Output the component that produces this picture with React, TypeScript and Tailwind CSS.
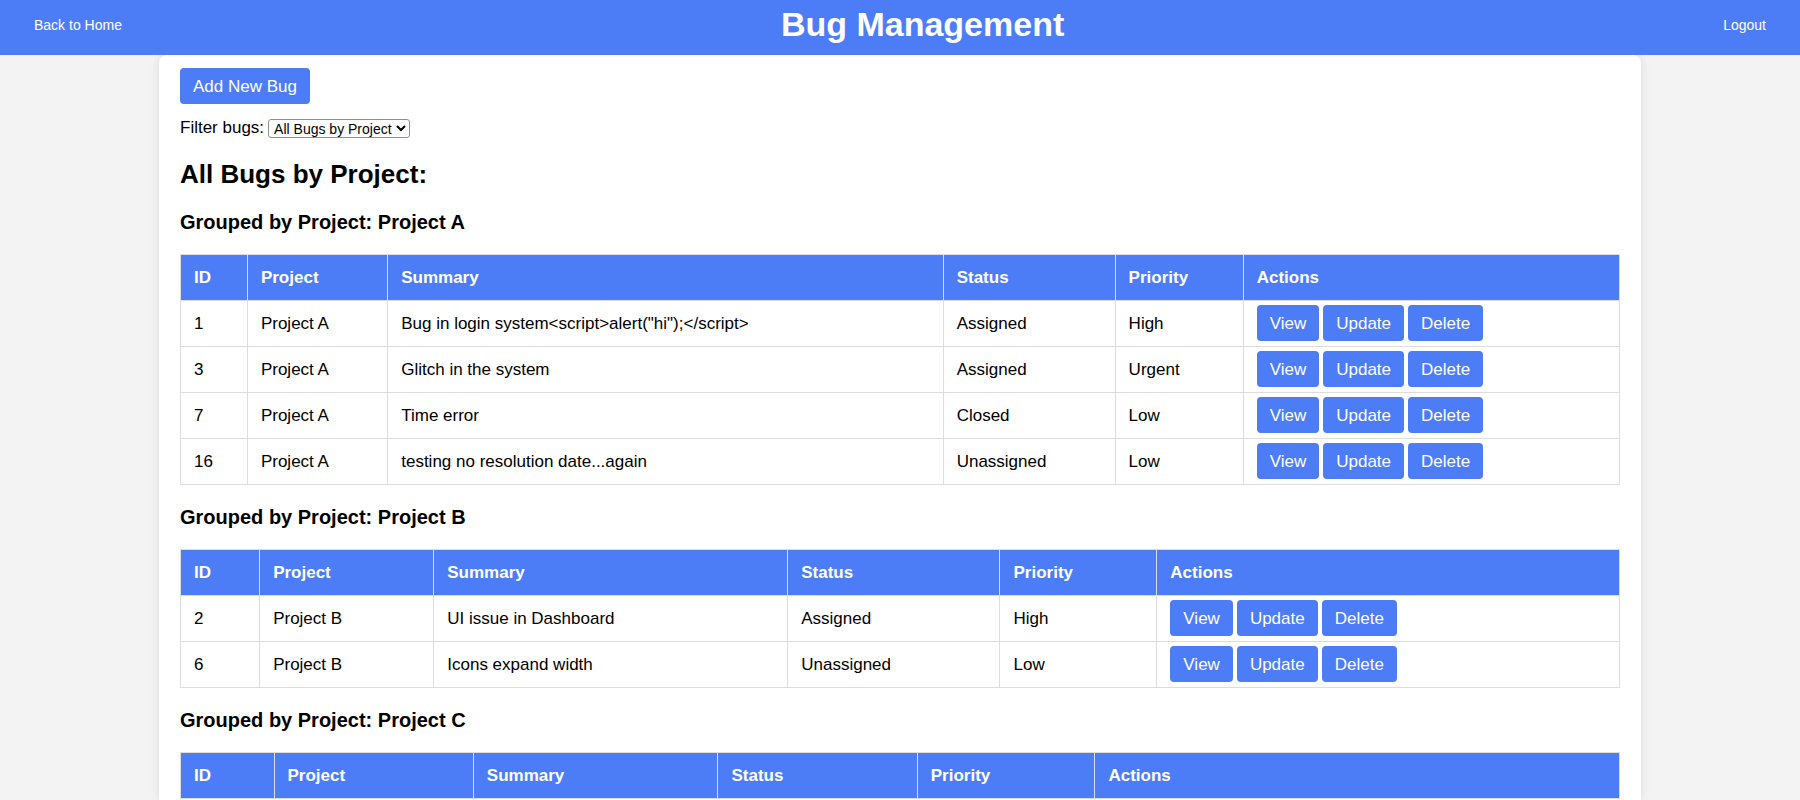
import { useState } from 'react'

type Bug = { id: number; summary: string; status: string; priority: string }
type Group = { project: string; widths: string[]; bugs: Bug[] }

const columns = ['ID', 'Project', 'Summary', 'Status', 'Priority', 'Actions']
const actions = ['View', 'Update', 'Delete']

const groups: Group[] = [
  {
    project: 'Project A',
    widths: ['w-[4.65%]', 'w-[9.75%]', 'w-[38.6%]', 'w-[11.95%]', 'w-[8.9%]', 'w-[26.15%]'],
    bugs: [
      { id: 1, summary: 'Bug in login system<script>alert("hi");</script>', status: 'Assigned', priority: 'High' },
      { id: 3, summary: 'Glitch in the system', status: 'Assigned', priority: 'Urgent' },
      { id: 7, summary: 'Time error', status: 'Closed', priority: 'Low' },
      { id: 16, summary: 'testing no resolution date...again', status: 'Unassigned', priority: 'Low' },
    ],
  },
  {
    project: 'Project B',
    widths: ['w-[5.5%]', 'w-[12.1%]', 'w-[24.6%]', 'w-[14.75%]', 'w-[10.9%]', 'w-[32.15%]'],
    bugs: [
      { id: 2, summary: 'UI issue in Dashboard', status: 'Assigned', priority: 'High' },
      { id: 6, summary: 'Icons expand width', status: 'Unassigned', priority: 'Low' },
    ],
  },
  {
    project: 'Project C',
    widths: ['w-[6.5%]', 'w-[13.85%]', 'w-[17%]', 'w-[13.85%]', 'w-[12.35%]', 'w-[36.45%]'],
    bugs: [],
  },
]

const buttonClass = 'h-9 rounded bg-[#4c7df7] px-[13px] pt-0.5 text-[17px] leading-5 text-white'
const cellClass = 'border border-[#ddd] px-[13px]'

function BugTable({ project, widths, bugs }: Group) {
  return (
    <section>
      <h3 className="my-5 text-[20px] leading-6 font-bold">Grouped by Project: {project}</h3>
      <table aria-label={project} className="w-full table-fixed border-collapse text-left">
        <thead>
          <tr className="h-[46px] bg-[#4c7df7] text-white">
            {columns.map((name, i) => (
              <th key={name} scope="col" className={`${cellClass} font-bold ${widths[i]}`}>
                {name}
              </th>
            ))}
          </tr>
        </thead>
        <tbody>
          {bugs.map((bug) => (
            <tr key={bug.id} className="h-[46px]">
              <td className={cellClass}>{bug.id}</td>
              <td className={cellClass}>{project}</td>
              <td className={cellClass}>{bug.summary}</td>
              <td className={cellClass}>{bug.status}</td>
              <td className={cellClass}>{bug.priority}</td>
              <td className={`${cellClass} pb-0.5`}>
                <div className="flex gap-1">
                  {actions.map((label) => (
                    <button key={label} type="button" className={buttonClass}>
                      {label}
                    </button>
                  ))}
                </div>
              </td>
            </tr>
          ))}
        </tbody>
      </table>
    </section>
  )
}

export default function App() {
  const [filter, setFilter] = useState('project')
  return (
    <div className="flex min-h-screen flex-col bg-[#f3f3f3] font-['Liberation_Sans',Arial,sans-serif] text-[17px] leading-5 text-black">
      <header className="relative z-10 flex items-center justify-between bg-[#4c7df7] px-[34px] pt-1 pb-[11px] text-white">
        <a href="#home" className="pt-0.5 text-[14px]">Back to Home</a>
        <h1 className="text-[34px] leading-10 font-bold">Bug Management</h1>
        <a href="#logout" className="pt-0.5 text-[14px]">Logout</a>
      </header>
      <main className="mx-auto w-full max-w-[1482px] grow rounded-t-lg bg-white px-[21px] pt-[13px] shadow-[0_0_10px_rgba(0,0,0,0.1)]">
        <button type="button" className={buttonClass}>Add New Bug</button>
        <div className="mt-[14px] flex items-center gap-1">
          <label htmlFor="filter">Filter bugs:</label>
          <select
            id="filter"
            value={filter}
            onChange={(e) => setFilter(e.target.value)}
            className="h-[19px] rounded-[3px] border border-[#8f8f8f] bg-white px-px text-[14px] leading-4"
          >
            <option value="project">All Bugs by Project</option>
          </select>
        </div>
        <h2 className="mt-5 text-[26px] leading-8 font-bold">All Bugs by Project:</h2>
        {groups.map((group) => (
          <BugTable key={group.project} {...group} />
        ))}
      </main>
    </div>
  )
}
